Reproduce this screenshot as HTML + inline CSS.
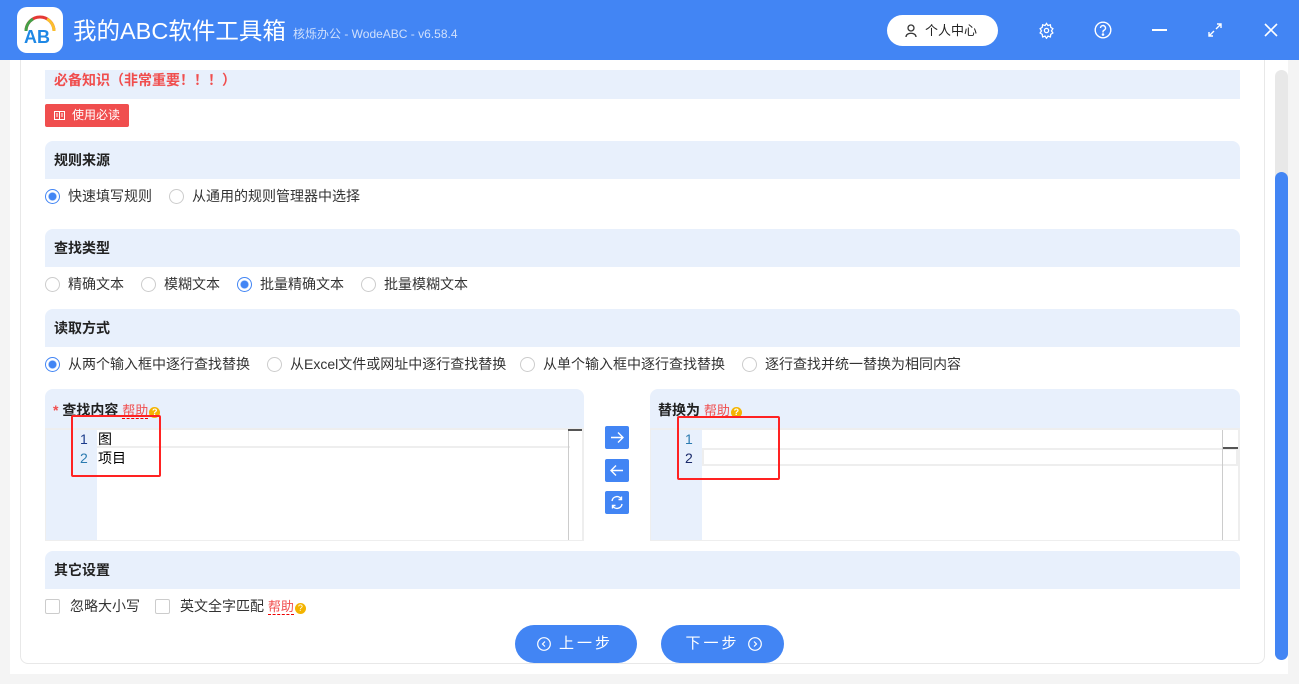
<!DOCTYPE html>
<html><head><meta charset="utf-8"><style>
*{margin:0;padding:0;box-sizing:border-box}
body{width:1299px;height:684px;background:#f4f4f4;font-family:"Liberation Sans","Noto Sans CJK SC",sans-serif;font-size:14px;color:#333;position:relative;overflow:hidden}
.a{position:absolute}
.hd{left:0;top:0;width:1299px;height:60px;background:#4285f4}
.blk{position:absolute;left:45px;width:1195px;background:#e8f0fc;border-radius:8px 8px 0 0;font-weight:bold;font-size:14px;color:#222;padding-left:9px}
.r{position:absolute;font-size:14px;color:#333;white-space:nowrap}
.rd{display:inline-block;width:15px;height:15px;border:1px solid #ccc;border-radius:50%;vertical-align:-3px;margin-right:8px;background:#fff}
.rd.on{border-color:#4285f4;background:radial-gradient(circle,#4285f4 0 3.5px,#fff 4.5px)}
.cb{display:inline-block;width:15px;height:15px;border:1px solid #ccc;border-radius:2px;vertical-align:-3px;margin-right:10px;background:#fff}
.help{color:#f04e4e;border-bottom:1px dashed #e00;font-size:13px}
.q{display:inline-block;width:11px;height:11px;border-radius:50%;background:#f4b400;color:#fff;font-size:9px;text-align:center;line-height:11px;vertical-align:0;margin-left:1px}
.ab{position:absolute;left:605px;width:24px;height:23px;background:#4285f4;border-radius:2px}
.btn{position:absolute;top:625px;height:38px;background:#4285f4;border-radius:19px;color:#fff;font-size:15px;line-height:38px;text-align:center;letter-spacing:3px}
</style></head><body>
<div class="a hd"></div>
<div class="a" style="left:17px;top:7px;width:46px;height:46px;background:#fff;border-radius:10px">
<svg width="46" height="46" viewBox="0 0 46 46"><path d="M9 24 A14 14 0 0 1 37 24" fill="none" stroke="#e53935" stroke-width="3"/><path d="M9 24 A14 14 0 0 1 16 12" fill="none" stroke="#43a047" stroke-width="3"/><path d="M30 12 A14 14 0 0 1 37 24" fill="none" stroke="#fbc02d" stroke-width="3"/><text x="7" y="36" font-family="Liberation Sans" font-weight="bold" font-size="18" fill="#1e88e5">AB</text></svg></div>
<div class="a" style="left:73px;top:15px;color:#fff;font-size:23.5px;line-height:32px">我的ABC软件工具箱</div>
<div class="a" style="left:293px;top:25px;color:#d0e0fc;font-size:12px">核烁办公 - WodeABC - v6.58.4</div>
<div class="a" style="left:887px;top:15px;width:111px;height:31px;background:#fff;border-radius:16px;font-size:13px;line-height:31px;color:#222"><svg class="a" style="left:18px;top:9px" width="12" height="13" viewBox="0 0 12 13"><circle cx="6" cy="4" r="3" fill="none" stroke="#333" stroke-width="1.3"/><path d="M1 13 C1 8 11 8 11 13" fill="none" stroke="#333" stroke-width="1.3"/></svg><span class="a" style="left:38px">个人中心</span></div>
<svg class="a" style="left:1038px;top:22px" width="17" height="17" viewBox="0 0 24 24" fill="none" stroke="#fff" stroke-width="1.8"><circle cx="12" cy="12" r="3"/><path d="M12 2l2 3 3.5-1 .5 3.5 3 2-2 3 2 3-3 2-.5 3.5-3.5-1-2 3-2-3-3.5 1-.5-3.5-3-2 2-3-2-3 3-2 .5-3.5 3.5 1z"/></svg>
<svg class="a" style="left:1094px;top:21px" width="18" height="18" viewBox="0 0 18 18" fill="none" stroke="#fff" stroke-width="1.4"><circle cx="9" cy="9" r="7.8"/><path d="M6.5 7a2.5 2.5 0 1 1 3.5 2.3c-.7.3-1 .8-1 1.5v.7"/><circle cx="9" cy="13.5" r=".6" fill="#fff"/></svg>
<div class="a" style="left:1152px;top:29px;width:15px;height:2px;background:#fff"></div>
<svg class="a" style="left:1208px;top:23px" width="14" height="14" viewBox="0 0 14 14" stroke="#fff" stroke-width="1.4" fill="none"><path d="M8 6l5-5M9 1h4v4M6 8l-5 5M1 9v4h4"/></svg>
<svg class="a" style="left:1264px;top:23px" width="14" height="14" viewBox="0 0 14 14" stroke="#fff" stroke-width="1.6"><path d="M1 1l12 12M13 1L1 13"/></svg>

<div class="a" style="left:10px;top:60px;width:1278px;height:614px;background:#fff"></div>
<div class="a" style="left:20px;top:60px;width:1245px;height:604px;border:1px solid #e8e8e8;border-top:none;border-radius:0 0 8px 8px"></div>
<div class="a" style="left:1275px;top:70px;width:13px;height:590px;background:#e8e8e8;border-radius:7px"></div>
<div class="a" style="left:1275px;top:172px;width:13px;height:488px;background:#4285f4;border-radius:7px"></div>

<div class="blk" style="top:70px;height:29px;line-height:20px;color:#f04e4e;border-radius:0">必备知识（非常重要！！！）</div>
<div class="a" style="left:45px;top:104px;width:84px;height:23px;background:#f04e4e;border-radius:2px;color:#fff;font-size:12px;line-height:23px;padding-left:27px"><svg class="a" style="left:9px;top:7px" width="11" height="9" viewBox="0 0 11 9" fill="none" stroke="#fff" stroke-width="1"><rect x=".5" y=".5" width="10" height="8"/><path d="M5.5 .5v8M2 3h2M2 5h2M7 3h2M7 5h2"/></svg>使用必读</div>

<div class="blk" style="top:141px;height:38px;line-height:38px">规则来源</div>
<div class="r" style="left:45px;top:186px"><span class="rd on"></span>快速填写规则</div>
<div class="r" style="left:169px;top:186px"><span class="rd"></span>从通用的规则管理器中选择</div>

<div class="blk" style="top:229px;height:38px;line-height:38px">查找类型</div>
<div class="r" style="left:45px;top:274px"><span class="rd"></span>精确文本</div>
<div class="r" style="left:141px;top:274px"><span class="rd"></span>模糊文本</div>
<div class="r" style="left:237px;top:274px"><span class="rd on"></span>批量精确文本</div>
<div class="r" style="left:361px;top:274px"><span class="rd"></span>批量模糊文本</div>

<div class="blk" style="top:309px;height:38px;line-height:38px">读取方式</div>
<div class="r" style="left:45px;top:354px"><span class="rd on"></span>从两个输入框中逐行查找替换</div>
<div class="r" style="left:267px;top:354px"><span class="rd"></span>从Excel文件或网址中逐行查找替换</div>
<div class="r" style="left:520px;top:354px"><span class="rd"></span>从单个输入框中逐行查找替换</div>
<div class="r" style="left:742px;top:354px"><span class="rd"></span>逐行查找并统一替换为相同内容</div>

<!-- left editor -->
<div class="a" style="left:45px;top:389px;width:539px;height:152px;background:#e8f0fc;border-radius:8px 8px 0 0"></div>
<div class="r" style="left:53px;top:400px;font-weight:bold;color:#222"><span style="color:#f04e4e">*</span> 查找内容 <span class="help" style="font-weight:normal">帮助</span><span class="q">?</span></div>
<div class="a" style="left:45px;top:428px;width:539px;height:113px;background:#eee"></div>
<div class="a" style="left:46px;top:430px;width:51px;height:110px;background:#e8f0fc"></div>
<div class="a" style="left:97px;top:430px;width:485px;height:110px;background:#fff"></div>
<div class="a" style="left:97px;top:446px;width:473px;height:2px;background:#eee"></div>
<div class="a" style="left:568px;top:430px;width:1px;height:110px;background:#ccc"></div>
<div class="a" style="left:568px;top:429px;width:14px;height:2px;background:#555"></div>
<div class="r" style="left:80px;top:430px;font-size:14px;color:#1a3a8a;line-height:19px">1<br><span style="color:#2a7ab0">2</span></div>
<div class="r" style="left:98px;top:430px;font-size:14px;color:#000;line-height:19px">图<br>项目</div>
<div class="a" style="left:71px;top:415px;width:90px;height:62px;border:2px solid #f22;border-radius:2px"></div>

<div class="ab" style="top:426px"><svg width="24" height="23" viewBox="0 0 24 23" fill="none" stroke="#fff" stroke-width="1.4"><path d="M6 11.5h12M13 6.5l5 5-5 5"/></svg></div>
<div class="ab" style="top:459px"><svg width="24" height="23" viewBox="0 0 24 23" fill="none" stroke="#fff" stroke-width="1.4"><path d="M18 11.5H6M11 6.5l-5 5 5 5"/></svg></div>
<div class="ab" style="top:491px"><svg width="24" height="23" viewBox="0 0 24 23" fill="none" stroke="#fff" stroke-width="1.4"><path d="M7 10a5 5 0 0 1 9.5-1.5M17 13a5 5 0 0 1-9.5 1.5M16.5 5.5v3h-3M7.5 17.5v-3h3"/></svg></div>

<!-- right editor -->
<div class="a" style="left:650px;top:389px;width:590px;height:152px;background:#e8f0fc;border-radius:8px 8px 0 0"></div>
<div class="r" style="left:658px;top:400px;font-weight:bold;color:#222">替换为 <span class="help" style="font-weight:normal;border:none">帮助</span><span class="q">?</span></div>
<div class="a" style="left:650px;top:428px;width:590px;height:113px;background:#eee"></div>
<div class="a" style="left:651px;top:430px;width:51px;height:110px;background:#e8f0fc"></div>
<div class="a" style="left:702px;top:430px;width:536px;height:110px;background:#fff"></div>
<div class="a" style="left:702px;top:448px;width:536px;height:18px;border:2px solid #eee"></div>
<div class="a" style="left:1222px;top:430px;width:1px;height:110px;background:#ccc"></div>
<div class="a" style="left:1223px;top:447px;width:15px;height:2px;background:#555"></div>
<div class="r" style="left:685px;top:430px;font-size:14px;color:#2a7ab0;line-height:19px">1<br><span style="color:#1a2a6a">2</span></div>
<div class="a" style="left:677px;top:416px;width:103px;height:64px;border:2px solid #f22;border-radius:2px"></div>

<div class="blk" style="top:551px;height:38px;line-height:38px">其它设置</div>
<div class="r" style="left:45px;top:596px"><span class="cb"></span>忽略大小写</div>
<div class="r" style="left:155px;top:596px"><span class="cb"></span>英文全字匹配 <span class="help">帮助</span><span class="q">?</span></div>

<div class="btn" style="left:515px;width:122px"><svg class="a" style="left:22px;top:12px" width="14" height="14" viewBox="0 0 14 14" fill="none" stroke="#fff" stroke-width="1.2"><circle cx="7" cy="7" r="6.3"/><path d="M8 4.5L5.5 7 8 9.5"/></svg><span style="margin-left:20px">上一步</span></div>
<div class="btn" style="left:661px;width:123px"><span style="margin-right:20px">下一步</span><svg class="a" style="left:87px;top:12px" width="14" height="14" viewBox="0 0 14 14" fill="none" stroke="#fff" stroke-width="1.2"><circle cx="7" cy="7" r="6.3"/><path d="M6 4.5L8.5 7 6 9.5"/></svg></div>
</body></html>
